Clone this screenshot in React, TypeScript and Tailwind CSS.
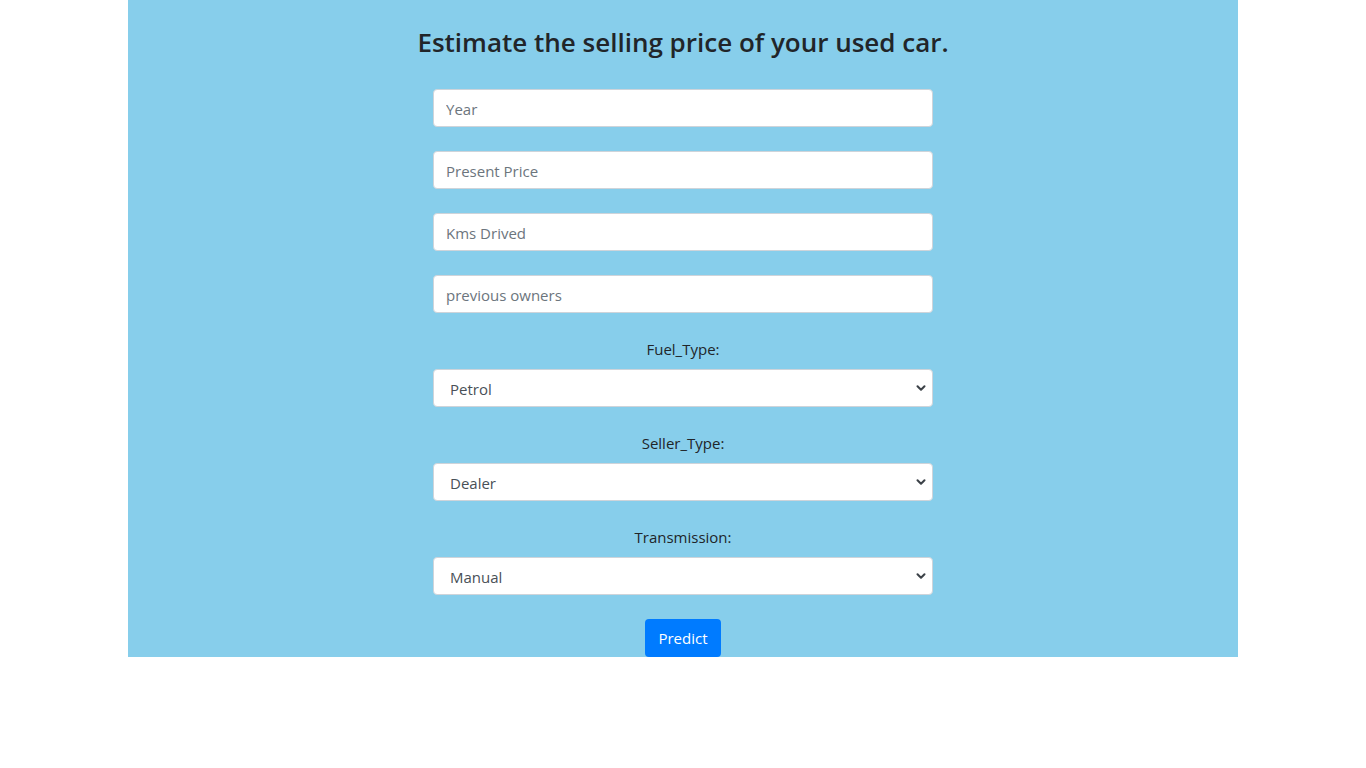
import { ChevronDown } from "lucide-react";

const font = { fontFamily: '"Open Sans", "Noto Sans", sans-serif' };

function TextField({ placeholder }: { placeholder: string }) {
  return (
    <input
      type="text"
      placeholder={placeholder}
      className="block w-full h-[38px] px-3 pt-[2px] text-[15px] text-[#495057] placeholder:text-[#6c757d] bg-white border border-[#ced4da] rounded-[4px] outline-none"
    />
  );
}

function SelectField({ label, options }: { label: string; options: string[] }) {
  return (
    <div className="flex flex-col items-center w-full">
      <label className="text-[15px] leading-6 text-[#212529] mb-2">{label}</label>
      <div className="relative w-full">
        <select className="block w-full h-[38px] pl-4 pr-8 pt-[2px] text-[15px] text-[#495057] bg-white border border-[#ced4da] rounded-[4px] appearance-none outline-none">
          {options.map((o) => (
            <option key={o}>{o}</option>
          ))}
        </select>
        <ChevronDown
          size={14}
          strokeWidth={3.5}
          className="absolute right-[5px] top-1/2 -translate-y-1/2 text-[#3c4248] pointer-events-none"
        />
      </div>
    </div>
  );
}

export default function App() {
  return (
    <div className="min-h-screen bg-white" style={font}>
      <div className="mx-auto w-[1110px] bg-[#87ceeb] flex flex-col items-center">
        <h3 className="pt-[25px] text-[26px] leading-[34px] font-semibold text-[#212529] mb-[30px]">
          Estimate the selling price of your used car.
        </h3>
        <form className="w-[500px] flex flex-col items-center gap-6">
          <TextField placeholder="Year" />
          <TextField placeholder="Present Price" />
          <TextField placeholder="Kms Drived" />
          <TextField placeholder="previous owners" />
          <SelectField label="Fuel_Type:" options={["Petrol", "Diesel", "CNG"]} />
          <SelectField label="Seller_Type:" options={["Dealer", "Individual"]} />
          <SelectField label="Transmission:" options={["Manual", "Automatic"]} />
          <button
            type="button"
            className="h-[38px] px-[13px] text-[15px] text-white bg-[#007bff] rounded-[4px]"
          >
            Predict
          </button>
        </form>
      </div>
    </div>
  );
}
